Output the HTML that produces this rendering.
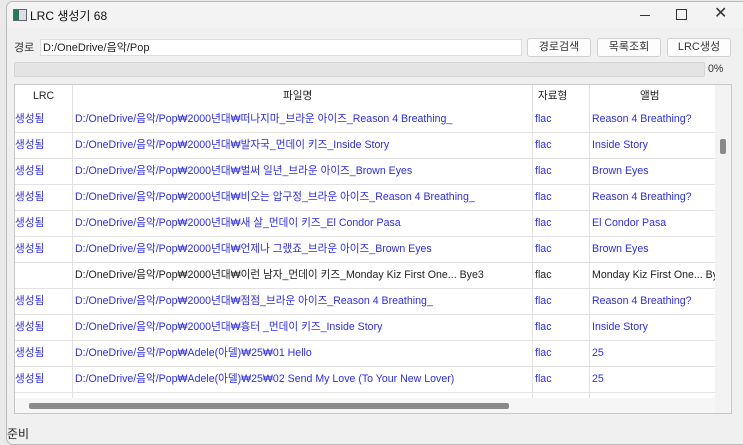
<!DOCTYPE html>
<html><head><meta charset="utf-8"><style>
body{margin:0;width:743px;height:444px;background:#e9e9e9;font-family:"Liberation Sans","Noto Sans CJK KR",sans-serif;font-size:10.6px;color:#222;overflow:hidden;position:relative}
.win{position:absolute;left:6px;top:1px;width:740px;height:442px;background:#f0f0f0;border:1px solid #b8b8b8;border-radius:7px 0 0 7px;overflow:hidden}
.a{position:absolute}
.btn{position:absolute;top:36px;height:17px;background:#fdfdfd;border:1px solid #d0d0d0;border-radius:3px;text-align:center;line-height:17px;font-size:11px;color:#333}
.tbl{position:absolute;left:7px;top:82px;width:716px;height:328px;background:#fff;border:1px solid #c8c8c8;overflow:hidden}
.row{position:absolute;left:0;width:700px;height:25px;border-bottom:1px solid #e2e2e2;line-height:25px;color:#2e2ee0;white-space:nowrap}
.row span{position:absolute;overflow:hidden;height:25px}
.c1{left:0;width:57px;padding-left:0}
.c2{left:57px;width:461px;border-left:1px solid #e2e2e2;padding-left:2px}
.c3{left:517px;width:57px;border-left:1px solid #e2e2e2;padding-left:2px}
.c4{left:574px;width:126px;border-left:1px solid #e2e2e2;padding-left:2px}
.blk{color:#222}
</style></head><body>
<div class="win">
 <div class="a" style="left:0;top:0;width:740px;height:26px;background:#f3f3f3"></div>
 <div class="a" style="left:6px;top:7px;width:12px;height:10px;border:1px solid #666;background:linear-gradient(90deg,#2a7a5a 40%,#dde 40%)"></div>
 <div class="a" style="left:23px;top:5px;font-size:12px;color:#111">LRC 생성기 68</div>
 <div class="a" style="left:633px;top:13px;width:10px;height:1px;background:#333"></div>
 <div class="a" style="left:669px;top:7px;width:9px;height:9px;border:1px solid #333"></div>
 <div class="a" style="left:707px;top:1px;font-size:16px;color:#333">✕</div>
 <div class="a" style="left:7px;top:37px;color:#333;font-size:11px">경로</div>
 <div class="a" style="left:33px;top:37px;height:17px;background:#fff;border:1px solid #ddd;line-height:16px;padding-left:2px;box-sizing:border-box;width:482px;font-size:11px">D:/OneDrive/음악/Pop</div>
 <div class="btn" style="left:520px;width:62px">경로검색</div>
 <div class="btn" style="left:590px;width:62px">목록조회</div>
 <div class="btn" style="left:660px;width:62px">LRC생성</div>
 <div class="a" style="left:7px;top:60px;width:689px;height:13px;background:#e4e4e4;border:1px solid #d4d4d4;border-radius:2px"></div>
 <div class="a" style="left:701px;top:61px;color:#333">0%</div>
 <div class="tbl">
  <div class="a" style="left:0;top:0;width:700px;height:22px;line-height:22px;color:#222">
   <span class="a" style="left:18px">LRC</span><span class="a" style="left:268px">파일명</span><span class="a" style="left:523px">자료형</span><span class="a" style="left:625px">앨범</span>
   <div class="a" style="left:57px;top:0;width:1px;height:22px;background:#e2e2e2"></div>
   <div class="a" style="left:517px;top:0;width:1px;height:22px;background:#e2e2e2"></div>
   <div class="a" style="left:574px;top:0;width:1px;height:22px;background:#e2e2e2"></div>
  </div>
  <div class="row" style="top:22px"><span class="c1">생성됨</span><span class="c2">D:/OneDrive/음악/Pop₩2000년대₩떠나지마_브라운 아이즈_Reason 4 Breathing_</span><span class="c3">flac</span><span class="c4">Reason 4 Breathing?</span></div>
  <div class="row" style="top:48px"><span class="c1">생성됨</span><span class="c2">D:/OneDrive/음악/Pop₩2000년대₩발자국_먼데이 키즈_Inside Story</span><span class="c3">flac</span><span class="c4">Inside Story</span></div>
  <div class="row" style="top:74px"><span class="c1">생성됨</span><span class="c2">D:/OneDrive/음악/Pop₩2000년대₩벌써 일년_브라운 아이즈_Brown Eyes</span><span class="c3">flac</span><span class="c4">Brown Eyes</span></div>
  <div class="row" style="top:100px"><span class="c1">생성됨</span><span class="c2">D:/OneDrive/음악/Pop₩2000년대₩비오는 압구정_브라운 아이즈_Reason 4 Breathing_</span><span class="c3">flac</span><span class="c4">Reason 4 Breathing?</span></div>
  <div class="row" style="top:126px"><span class="c1">생성됨</span><span class="c2">D:/OneDrive/음악/Pop₩2000년대₩새 살_먼데이 키즈_El Condor Pasa</span><span class="c3">flac</span><span class="c4">El Condor Pasa</span></div>
  <div class="row" style="top:152px"><span class="c1">생성됨</span><span class="c2">D:/OneDrive/음악/Pop₩2000년대₩언제나 그랬죠_브라운 아이즈_Brown Eyes</span><span class="c3">flac</span><span class="c4">Brown Eyes</span></div>
  <div class="row blk" style="top:178px"><span class="c1"></span><span class="c2">D:/OneDrive/음악/Pop₩2000년대₩이런 남자_먼데이 키즈_Monday Kiz First One... Bye3</span><span class="c3">flac</span><span class="c4">Monday Kiz First One... By</span></div>
  <div class="row" style="top:204px"><span class="c1">생성됨</span><span class="c2">D:/OneDrive/음악/Pop₩2000년대₩점점_브라운 아이즈_Reason 4 Breathing_</span><span class="c3">flac</span><span class="c4">Reason 4 Breathing?</span></div>
  <div class="row" style="top:230px"><span class="c1">생성됨</span><span class="c2">D:/OneDrive/음악/Pop₩2000년대₩흉터 _먼데이 키즈_Inside Story</span><span class="c3">flac</span><span class="c4">Inside Story</span></div>
  <div class="row" style="top:256px"><span class="c1">생성됨</span><span class="c2">D:/OneDrive/음악/Pop₩Adele(아델)₩25₩01 Hello</span><span class="c3">flac</span><span class="c4">25</span></div>
  <div class="row" style="top:282px"><span class="c1">생성됨</span><span class="c2">D:/OneDrive/음악/Pop₩Adele(아델)₩25₩02 Send My Love (To Your New Lover)</span><span class="c3">flac</span><span class="c4">25</span></div>
  <div class="row" style="top:308px"><span class="c1"></span><span class="c2"></span><span class="c3"></span><span class="c4"></span></div>
  <div class="a" style="left:0;top:313px;width:700px;height:15px;background:#f6f6f6"></div>
  <div class="a" style="left:14px;top:318px;width:480px;height:6px;background:#8a8a8a;border-radius:2px"></div>
  <div class="a" style="left:700px;top:0;width:16px;height:328px;background:#f3f3f3"></div>
  <div class="a" style="left:705px;top:54px;width:6px;height:15px;background:#8a8a8a;border-radius:2px"></div>
 </div>
 <div class="a" style="left:0;top:423px;color:#222;font-size:12px">준비</div>
</div>
</body></html>
